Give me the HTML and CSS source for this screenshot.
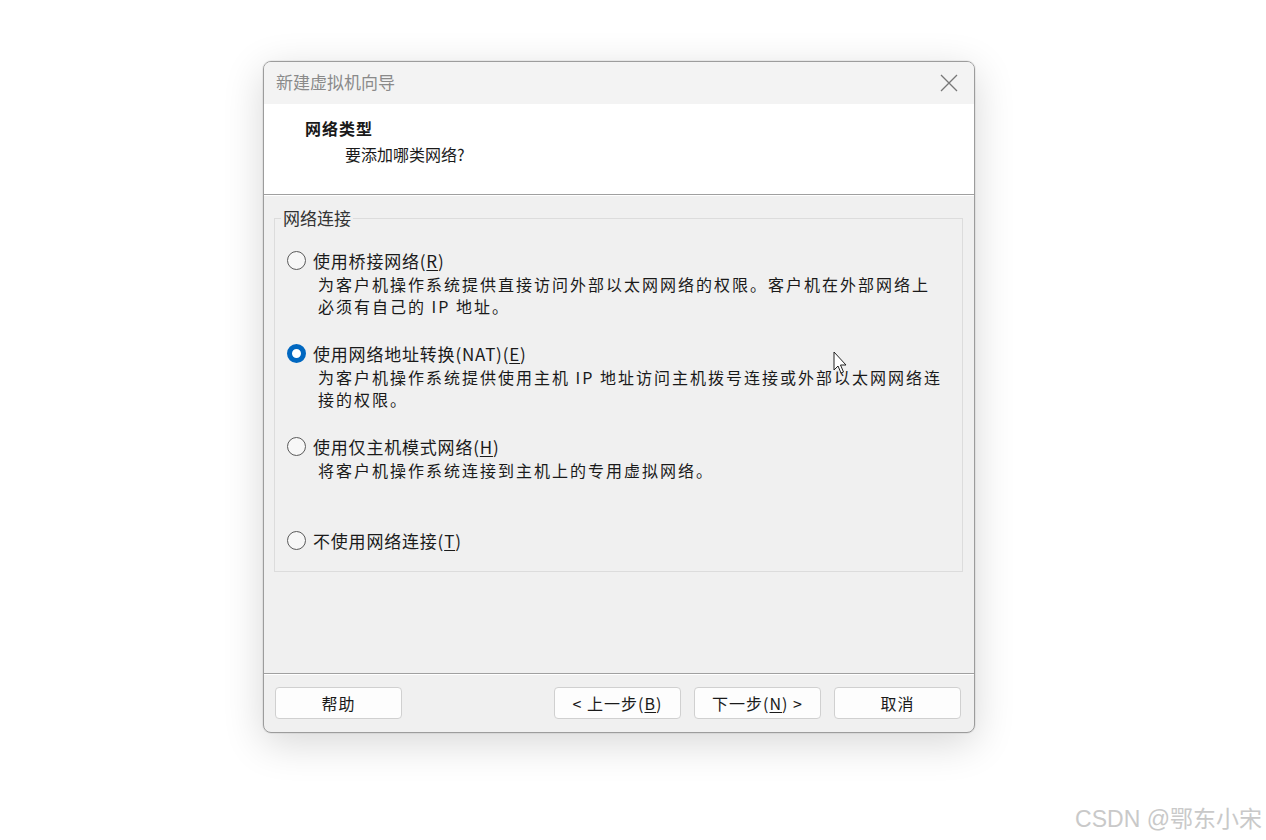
FILE: index.html
```html
<!DOCTYPE html>
<html lang="zh-CN">

<head>
  <meta charset="UTF-8">
  <title>新建虚拟机向导</title>
  <link rel="stylesheet" href="styles.css">
</head>

<body>

  <div class="stage">
    <div class="wizard">
      <div class="titlebar">
        <span class="title">新建虚拟机向导</span>
        <svg class="close" width="18" height="18" viewBox="0 0 18 18">
          <path d="M1 1 L17 17 M17 1 L1 17" stroke="#777" stroke-width="1.3" fill="none" />
        </svg>
      </div>

      <div class="header">
        <div class="heading">网络类型</div>
        <div class="subheading">要添加哪类网络?</div>
      </div>

      <div class="content">
        <fieldset class="group">
          <legend>网络连接</legend>

          <div class="option first">
            <div class="label"><span class="radio"></span>使用桥接网络(<u>R</u>)</div>
            <div class="desc">为客户机操作系统提供直接访问外部以太网网络的权限。客户机在外部网络上<br>必须有自己的 IP 地址。</div>
          </div>

          <div class="option">
            <div class="label"><span class="radio checked"></span>使用网络地址转换(NAT)(<u>E</u>)</div>
            <div class="desc">为客户机操作系统提供使用主机 IP 地址访问主机拨号连接或外部以太网网络连<br>接的权限。</div>
          </div>

          <div class="option">
            <div class="label"><span class="radio"></span>使用仅主机模式网络(<u>H</u>)</div>
            <div class="desc">将客户机操作系统连接到主机上的专用虚拟网络。</div>
          </div>

          <div class="option last">
            <div class="label"><span class="radio"></span>不使用网络连接(<u>T</u>)</div>
          </div>
        </fieldset>
      </div>

      <div class="footer">
        <button class="btn">帮助</button>
        <span class="spacer"></span>
        <button class="btn">&lt; 上一步(<u>B</u>)</button>
        <button class="btn">下一步(<u>N</u>) &gt;</button>
        <button class="btn">取消</button>
      </div>
    </div>
  </div>

  <svg class="cursor" width="16" height="24" viewBox="0 0 16 24">
    <path d="M1 1 L1 19 L5 15 L8 22 L10.5 21 L7.5 14 L13 14 Z" fill="#fff" stroke="#222" stroke-width="1" />
  </svg>

  <div class="watermark">CSDN @鄂东小宋</div>

</body>

</html>
```

FILE: styles.css
```css
html {
  box-sizing: border-box;
}

*,
*:before,
*:after {
  box-sizing: inherit;
}

body {
  margin: 0;
  width: 1266px;
  height: 840px;
  background: #fff;
  font-family: "Noto Sans CJK SC", "Noto Sans", sans-serif;
  color: #1a1a1a;
  position: relative;
  overflow: hidden;
}

.stage {
  padding: 61px 0 0 263px;
}

.wizard {
  width: 712px;
  height: 672px;
  border: 1px solid #9c9c9c;
  border-radius: 8px;
  background: #f0f0f0;
  box-shadow: 0 10px 40px rgba(0, 0, 0, 0.16), 0 0 0 1px rgba(0, 0, 0, 0.05);
  display: flex;
  flex-direction: column;
  overflow: hidden;
}

.titlebar {
  height: 42px;
  background: #f3f3f3;
  display: flex;
  align-items: center;
  justify-content: space-between;
  padding: 0 16px 4px 12px;
}

.title {
  font-size: 17px;
  color: #8a8a8a;
}

.close {
  margin-top: 4px;
}

.header {
  height: 91px;
  background: #fff;
  border-bottom: 1px solid #a0a0a0;
  padding: 12px 0 0 41px;
  font-size: 16px;
}

.heading {
  font-weight: bold;
  line-height: 24px;
  letter-spacing: 1px;
}

.subheading {
  margin-left: 40px;
  line-height: 28px;
}

.content {
  flex: 1;
  border-top: 1px solid #fff;
  border-bottom: 1px solid #a0a0a0;
  padding: 11px 11px 0 10px;
}

.group {
  margin: 0;
  border: 1px solid #dcdcdc;
  padding: 0 10px 19px 6px;
  font-size: 17px;
}

.group legend {
  padding: 0 2px;
  line-height: 22px;
  color: #333;
}

.option {
  margin-top: 24px;
  padding-left: 6px;
}

.option.first {
  margin-top: 19px;
}

.option.last {
  margin-top: 47px;
}

.label {
  display: flex;
  align-items: center;
  height: 24px;
  white-space: nowrap;
  letter-spacing: 0.8px;
}

.radio {
  width: 19px;
  height: 19px;
  border: 1px solid #5a5a5a;
  border-radius: 50%;
  margin-right: 7px;
  background: #f7f7f7;
  flex: none;
}

.radio.checked {
  border: 5px solid #0067c0;
  background: #fff;
}

.desc {
  margin: 1px 0 0 31px;
  font-size: 16px;
  line-height: 22px;
  letter-spacing: 2px;
  white-space: nowrap;
}

u {
  text-underline-offset: 2px;
}

.footer {
  border-top: 1px solid #fff;
  display: flex;
  gap: 13px;
  padding: 12px 13px 0 11px;
  height: 58px;
}

.spacer {
  flex: 1;
}

.btn {
  width: 127px;
  height: 32px;
  background: #fdfdfd;
  border: 1px solid #d0d0d0;
  border-radius: 4px;
  font-family: inherit;
  font-size: 16px;
  letter-spacing: 1px;
  color: #1a1a1a;
  padding: 0;
}

.cursor {
  position: absolute;
  left: 833px;
  top: 351px;
}

.watermark {
  position: absolute;
  right: 4px;
  bottom: 6px;
  font-size: 23px;
  color: #c9c9c9;
  font-family: "Liberation Sans", "Noto Sans CJK SC", sans-serif;
}
```
